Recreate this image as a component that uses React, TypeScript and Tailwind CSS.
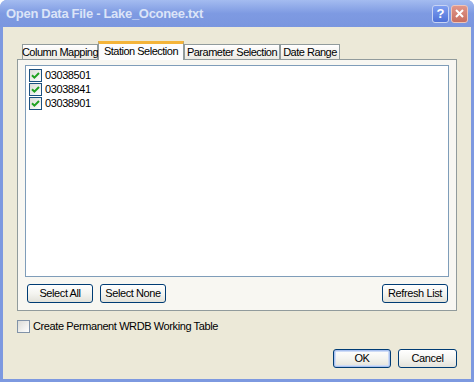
import React from "react";

const font = { fontFamily: '"Liberation Sans", Arial, sans-serif' };

const btnCls =
  "flex items-center justify-center rounded-[3px] border border-[#003c74] bg-gradient-to-b from-[#ffffff] via-[#f4f4f0] to-[#e3e2da] text-[11px] tracking-[-0.4px] text-black";

function Check({ checked }: { checked: boolean }) {
  return (
    <span className="flex h-[13px] w-[13px] shrink-0 items-center justify-center border border-[#1c5180] bg-gradient-to-br from-[#dcdcd7] to-[#ffffff]">
      {checked && (
        <svg width="9" height="9" viewBox="0 0 9 9">
          <path d="M1 4.2 L3.4 6.6 L8 2" fill="none" stroke="#21a121" strokeWidth="2" />
        </svg>
      )}
    </span>
  );
}

function Tab({ label, active, w }: { label: string; active?: boolean; w: string }) {
  if (active) {
    return (
      <div
        className={`relative z-10 -mb-px flex h-[19px] ${w} items-center justify-center whitespace-nowrap border-x border-t-[3px] border-x-[#919b9c] border-t-[#f4b43a] bg-[#fcfcfe] pb-[1px] text-[11px] tracking-[-0.5px]`}
      >
        {label}
      </div>
    );
  }
  return (
    <div
      className={`flex h-[15px] ${w} items-center justify-center whitespace-nowrap border-x border-t border-[#919b9c] bg-gradient-to-b from-[#ffffff] to-[#eceae3] pt-[1px] text-[11px] tracking-[-0.5px]`}
    >
      {label}
    </div>
  );
}

export default function App() {
  const stations = ["03038501", "03038841", "03038901"];
  return (
    <div style={font} className="flex h-[382px] w-[474px] flex-col rounded-t-[7px] bg-[#7d99e0] text-black">
      {/* title bar */}
      <div className="flex h-[27px] shrink-0 items-center justify-between rounded-t-[7px] bg-gradient-to-b from-[#a4bcf0] via-[#7e9ae2] to-[#7a96df] pl-[6px] pr-[6px]">
        <span className="text-[13px] font-bold tracking-[-0.3px] text-[#dbe4f8]">
          Open Data File - Lake_Oconee.txt
        </span>
        <div className="flex gap-[2px]">
          <div className="flex h-[18px] w-[17px] items-center justify-center rounded-[3px] border border-[#c8d4f4] bg-gradient-to-b from-[#7f9ef0] to-[#4f72d8] text-[13px] font-bold text-white">
            ?
          </div>
          <div className="flex h-[18px] w-[17px] items-center justify-center rounded-[3px] border border-[#eec4b8] bg-gradient-to-b from-[#e0968a] to-[#c86f60]">
            <svg width="9" height="9" viewBox="0 0 9 9">
              <path d="M1 1 L8 8 M8 1 L1 8" stroke="white" strokeWidth="2" />
            </svg>
          </div>
        </div>
      </div>

      {/* body */}
      <div className="mb-[3px] ml-[3px] mr-[3px] flex flex-1 flex-col bg-[#ece9d8] px-[14px] pt-[14px]">
        <div className="flex items-end pl-[5px]">
          <Tab label="Column Mapping" w="w-[76px]" />
          <Tab label="Station Selection" active w="w-[86px]" />
          <Tab label="Parameter Selection" w="w-[96px]" />
          <Tab label="Date Range" w="w-[60px]" />
        </div>
        <div className="flex h-[252px] w-[440px] flex-col border border-[#919b9c] bg-[#f8f7f2] px-[7px] pt-[5px]">
          <div className="flex h-[212px] flex-col border border-[#7f9db9] bg-white pl-[3px] pt-[2px]">
            {stations.map((s) => (
              <div key={s} className="flex h-[14px] items-center gap-[3px] text-[11px] tracking-[-0.4px]">
                <Check checked />
                <span>{s}</span>
              </div>
            ))}
          </div>
          <div className="mt-[7px] flex items-center">
            <button className={`${btnCls} ml-[2px] h-[19px] w-[66px]`}>Select All</button>
            <button className={`${btnCls} ml-[7px] h-[19px] w-[66px]`}>Select None</button>
            <button className={`${btnCls} ml-auto mr-[1px] h-[19px] w-[66px]`}>Refresh List</button>
          </div>
        </div>
        <div className="mt-[7px] flex items-center gap-[3px] text-[11px] tracking-[-0.4px]">
          <span className="h-[13px] w-[13px] border border-[#8193a8] bg-gradient-to-br from-[#dcdcd7] to-[#ffffff]" />
          <span>Create Permanent WRDB Working Table</span>
        </div>
        <div className="mt-[14px] flex justify-end gap-[7px] pr-[0px]">
          <button className={`${btnCls} h-[19px] w-[58px] shadow-[inset_0_0_0_1px_#a9c1ef,inset_0_0_0_2px_#cfdcf6]`}>OK</button>
          <button className={`${btnCls} h-[19px] w-[59px]`}>Cancel</button>
        </div>
      </div>
    </div>
  );
}
